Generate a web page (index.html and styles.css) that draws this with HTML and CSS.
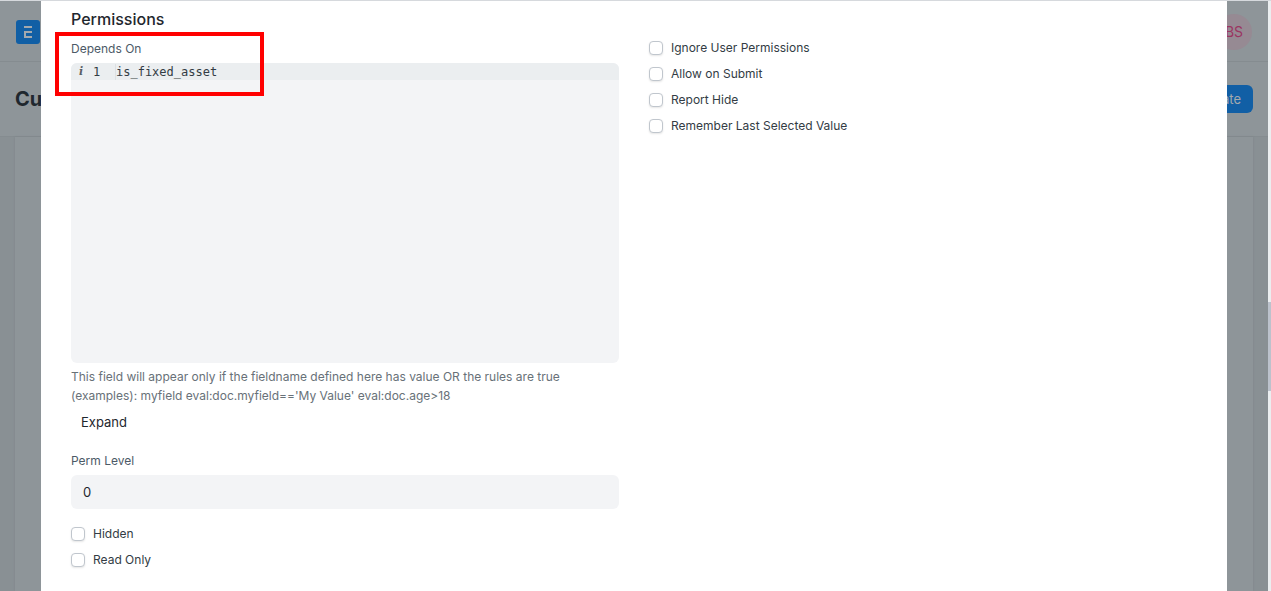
FILE: index.html
```html
<!DOCTYPE html>
<html lang="en">
<head>
<meta charset="utf-8">
<title>Customize Form</title>
<link rel="stylesheet" href="styles.css">
</head>
<body>
<div class="window">
  <div class="page">
    <header class="navbar">
      <svg class="logo" viewBox="0 0 24 24" aria-hidden="true">
        <rect width="24" height="24" rx="3" fill="#115fa5"/>
        <path d="M8 6h8v2H8zM8 11h8v2h-6v3h6v2H8z" fill="#a3a9ae"/>
      </svg>
      <span class="avatar">BS</span>
    </header>
    <div class="page-head">
      <h1 class="page-title">Customize Form</h1>
      <button class="primary" type="button">Update</button>
    </div>
    <main class="page-body"><div class="sheet"></div></main>

    <section class="modal" role="dialog" aria-labelledby="section-title">
      <h2 class="section-title" id="section-title">Permissions</h2>
      <div class="columns">
        <div class="column">
          <div class="label" id="depends-label">Depends On</div>
          <div class="editor" role="textbox" tabindex="0" aria-labelledby="depends-label">
            <div class="code-line"><span class="info">i</span><span class="line-number">1</span><code class="code">is_fixed_asset</code></div>
          </div>
          <p class="help">This field will appear only if the fieldname defined here has value OR the rules are true<br>(examples): myfield eval:doc.myfield=='My Value' eval:doc.age&gt;18</p>
          <button class="expand" type="button">Expand</button>
          <label class="label" for="perm-level">Perm Level</label>
          <input class="text-input" id="perm-level" type="text" value="0">
          <div class="checks">
            <label class="check"><input class="box" type="checkbox">Hidden</label>
            <label class="check"><input class="box" type="checkbox">Read Only</label>
          </div>
        </div>
        <div class="column">
          <div class="checks">
            <label class="check"><input class="box" type="checkbox">Ignore User Permissions</label>
            <label class="check"><input class="box" type="checkbox">Allow on Submit</label>
            <label class="check"><input class="box" type="checkbox">Report Hide</label>
            <label class="check"><input class="box" type="checkbox">Remember Last Selected Value</label>
          </div>
        </div>
      </div>
      <div class="highlight"></div>
    </section>
  </div>
  <div class="scrollbar"><div class="thumb"></div></div>
</div>
</body>
</html>
```
FILE: styles.css
```css
* { box-sizing: border-box; }

body {
  margin: 0;
  font-family: Inter, "Liberation Sans", sans-serif;
  font-size: 12px;
  color: #1f272e;
  overflow: hidden;
}

.window {
  display: flex;
  height: 100vh;
  border-top: 1px solid #d6d9dd;
}

.page {
  position: relative;
  flex: 1;
  display: flex;
  flex-direction: column;
  background: #899094;
}

.navbar,
.page-head {
  display: flex;
  align-items: center;
  justify-content: space-between;
  padding: 0 15px;
  background: #8e9599;
  border-bottom: 1px solid #858c90;
}

.navbar { height: 61px; padding: 1px 16px 0; }
.page-head { height: 75px; }

.logo { width: 24px; height: 24px; }

.avatar {
  width: 36px;
  height: 36px;
  border-radius: 50%;
  background: #968a93;
  color: #9b3561;
  font-size: 14px;
  line-height: 36px;
  text-align: center;
}

.page-title {
  margin: 0;
  font-size: 20px;
  font-weight: 700;
  color: #1f272e;
}

.primary {
  height: 28px;
  padding: 0 12px;
  border: 0;
  border-radius: 6px;
  background: #115fa5;
  color: #a3a9ae;
  font: 13px Inter, sans-serif;
}

.page-body { flex: 1; display: flex; padding: 0 15px; }

.sheet {
  flex: 1;
  background: #8e9599;
  box-shadow: 0 0 2px #7d8488;
}

.modal {
  position: absolute;
  inset: 0 41px;
  padding: 8px 30px;
  background: #fff;
}

.section-title {
  margin: 0 0 9px;
  font-size: 16px;
  line-height: 20px;
  font-weight: 500;
}

.columns {
  display: grid;
  grid-template-columns: 1fr 1fr;
  gap: 30px;
}

.label {
  display: block;
  margin-bottom: 3px;
  line-height: 22px;
  color: #4c5a67;
}

.editor {
  height: 300px;
  border-radius: 6px;
  background: #f3f4f6;
  overflow: hidden;
}

.code-line {
  display: flex;
  align-items: flex-end;
  height: 17px;
  padding-left: 8px;
  background: #ebeef0;
  font: 12px/16px "DejaVu Sans Mono", monospace;
}

.info {
  width: 14px;
  font: italic bold 11px/16px "DejaVu Serif", serif;
  color: #5a5f64;
}

.line-number { width: 22px; color: #333c44; }

.code {
  font: inherit;
  color: #333c44;
  border-left: 1px solid #dce0e3;
}

.help {
  margin: 4px 0 5px;
  line-height: 19px;
  color: #687178;
}

.expand {
  display: block;
  height: 24px;
  margin-bottom: 16px;
  padding: 0 10px;
  border: 0;
  background: none;
  color: #1f272e;
  font: 13px/24px Inter, sans-serif;
}

.text-input {
  display: block;
  width: 100%;
  height: 34px;
  padding: 0 12px;
  border: 0;
  border-radius: 6px;
  background: #f3f4f6;
  color: #1f272e;
  font: 13px Inter, sans-serif;
}

.checks {
  display: flex;
  flex-direction: column;
  gap: 6px;
}

.text-input + .checks { margin-top: 15px; }

.check {
  display: flex;
  align-items: center;
  gap: 8px;
  height: 20px;
  line-height: 20px;
  color: #333c44;
}

.box {
  appearance: none;
  width: 14px;
  height: 14px;
  margin: 0;
  border: 1px solid #c0c6cd;
  border-radius: 4px;
  background: #fff;
  box-shadow: 0 1px 2px rgba(0, 0, 0, 0.1);
}

.highlight {
  position: absolute;
  left: 14px;
  top: 31px;
  width: 209px;
  height: 64px;
  border: 4px solid #f00;
}

.scrollbar {
  width: 3px;
  padding-top: 301px;
  background: #ebeef0;
}

.thumb { height: 89px; background: #bcc2cc; }
```
